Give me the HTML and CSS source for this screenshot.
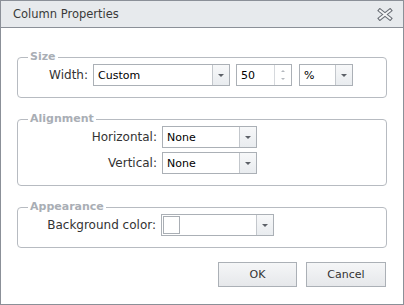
FILE: index.html
```html
<!DOCTYPE html>
<html lang="en">
<head>
  <meta charset="UTF-8">
  <title>Column Properties</title>
  <link rel="stylesheet" href="styles.css">
</head>
<body>
  <div class="dialog">
    <div class="titlebar">
      <span class="title">Column Properties</span>
      <svg class="close" width="16" height="13" viewBox="0 0 16 13">
        <path d="M3 2.5 L13 10.5 M13 2.5 L3 10.5" stroke="#6b7077" stroke-width="4" stroke-linecap="square" fill="none"/>
        <path d="M3 2.5 L13 10.5 M13 2.5 L3 10.5" stroke="#f4f5f6" stroke-width="1.8" stroke-linecap="square" fill="none"/>
      </svg>
    </div>

    <div class="content">
      <fieldset class="group">
        <legend>Size</legend>
        <div class="row">
          <label class="lbl lbl-size">Width:</label>
          <div class="combo w-width"><span class="value">Custom</span><span class="drop"><i class="arrow"></i></span></div>
          <div class="combo spin"><span class="value">50</span><span class="spinbtn"><i class="up"></i><i class="down"></i></span></div>
          <div class="combo w-unit"><span class="value">%</span><span class="drop"><i class="arrow"></i></span></div>
        </div>
      </fieldset>

      <fieldset class="group">
        <legend>Alignment</legend>
        <div class="row">
          <label class="lbl lbl-align">Horizontal:</label>
          <div class="combo w-align"><span class="value">None</span><span class="drop"><i class="arrow"></i></span></div>
        </div>
        <div class="row">
          <label class="lbl lbl-align">Vertical:</label>
          <div class="combo w-align"><span class="value">None</span><span class="drop"><i class="arrow"></i></span></div>
        </div>
      </fieldset>

      <fieldset class="group">
        <legend>Appearance</legend>
        <div class="row">
          <label class="lbl lbl-look">Background color:</label>
          <div class="combo w-color"><span class="value"><span class="swatch"></span></span><span class="drop"><i class="arrow"></i></span></div>
        </div>
      </fieldset>

      <div class="buttons">
        <button class="btn btn-ok">OK</button>
        <button class="btn btn-cancel">Cancel</button>
      </div>
    </div>
  </div>
</body>
</html>
```

FILE: styles.css
```css
body {
  margin: 0;
  font-family: "DejaVu Sans", Verdana, sans-serif;
  font-size: 11px;
  color: #333;
}

.dialog {
  width: 404px;
  height: 305px;
  box-sizing: border-box;
  border: 1px solid #8b9098;
  background: #fff;
}

.titlebar {
  height: 26px;
  border-bottom: 1px solid #8b9098;
  background: #e7eaed;
  display: flex;
  align-items: center;
  justify-content: space-between;
  padding: 0 10px 0 12px;
}

.title {
  font-size: 11.5px;
  color: #3a3a3a;
}

.close {
  display: block;
  margin-top: 1px;
}

.content {
  padding: 22px 16px 0 16px;
}

.group {
  margin: 0 0 14px 0;
  padding: 0 0 11px 0;
  border: 1px solid #b7bbc1;
  border-radius: 4px;
}

.group legend {
  margin-left: 10px;
  padding: 0 2px;
  font-weight: bold;
  color: #a9aeb5;
  line-height: 14px;
}

.row {
  display: flex;
  align-items: center;
  margin-bottom: 4px;
}

.row:last-child {
  margin-bottom: 0;
}

.lbl {
  text-align: right;
  padding-right: 5px;
  box-sizing: border-box;
  font-size: 12px;
}

.lbl-size { width: 75px; }
.lbl-align { width: 144px; }
.lbl-look { width: 143px; }

.combo {
  height: 22px;
  box-sizing: border-box;
  border: 1px solid #abb0b6;
  display: flex;
  background: #fff;
  color: #000;
}

.combo .value {
  flex: 1;
  display: flex;
  align-items: center;
  padding-left: 4px;
}

.drop, .spinbtn {
  width: 16px;
  border-left: 1px solid #c3c7cc;
  background: linear-gradient(#f7f8f9, #e9ecef);
  display: flex;
  align-items: center;
  justify-content: center;
}

.arrow {
  width: 0;
  height: 0;
  border-left: 3px solid transparent;
  border-right: 3px solid transparent;
  border-top: 3px solid #5d6168;
}

.spinbtn {
  flex-direction: column;
  gap: 6px;
  background: #fff;
  border-left-color: #d6d9dd;
}

.up, .down {
  width: 0;
  height: 0;
  border-left: 2px solid transparent;
  border-right: 2px solid transparent;
}

.up { border-bottom: 2px solid #b4b8be; }
.down { border-top: 2px solid #b4b8be; }

.w-width { width: 137px; }
.spin { width: 56px; margin-left: 6px; }
.w-unit { width: 54px; margin-left: 7px; }
.w-align { width: 95px; }
.w-color { width: 113px; }

.w-color .value {
  padding-left: 1px;
}

.swatch {
  width: 15px;
  height: 16px;
  border: 1px solid #a9aeb4;
}

.buttons {
  display: flex;
  justify-content: flex-end;
  gap: 9px;
  padding-right: 1px;
  margin-top: 3px;
}

.btn {
  height: 25px;
  font-family: inherit;
  font-size: 11px;
  color: #333;
  border: 1px solid #abb0b6;
  background: linear-gradient(#f5f6f7, #e6e8eb);
  padding: 0;
}

.btn-ok { width: 79px; }
.btn-cancel { width: 80px; }
```
